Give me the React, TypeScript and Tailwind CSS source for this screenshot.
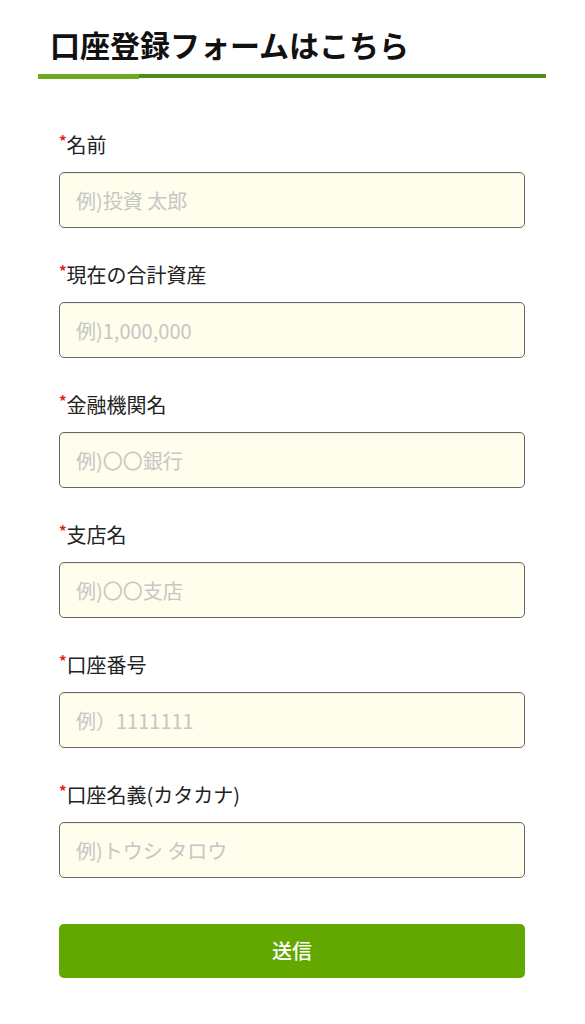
const fields = [
  { label: '名前', placeholder: '例)投資 太郎' },
  { label: '現在の合計資産', placeholder: '例)1,000,000' },
  { label: '金融機関名', placeholder: '例)〇〇銀行' },
  { label: '支店名', placeholder: '例)〇〇支店' },
  { label: '口座番号', placeholder: '例）1111111' },
  { label: '口座名義(カタカナ)', placeholder: '例)トウシ タロウ' },
];

function App() {
  return (
    <div
      className="min-h-screen bg-white text-[#222]"
      style={{ fontFamily: '"Noto Sans CJK JP", "Noto Sans", sans-serif' }}
    >
      <div className="ml-[38px] w-[508px] pt-[22px]">
        {/* 見出し */}
        <h2 className="pl-[12px] pb-[8px] text-[30px] font-bold leading-[44px] text-[#111]">
          口座登録フォームはこちら
        </h2>
        <div className="flex items-start">
          <div className="h-[5px] w-[101px] bg-[#6aab1f]" />
          <div className="h-[4px] flex-1 bg-[#4e8b1b]" />
        </div>

        <form
          className="flex flex-col gap-[33px] px-[21px] pt-[52px]"
          onSubmit={(e) => e.preventDefault()}
        >
          {fields.map((f) => (
            <div key={f.label} className="flex flex-col gap-[13px]">
              <label className="flex items-start text-[20px] leading-[28px] text-[#222]">
                <span className="mt-[1px] text-[15px] font-bold leading-[18px] text-[#e02020]">*</span>
                <span>{f.label}</span>
              </label>
              <input
                type="text"
                placeholder={f.placeholder}
                className="block h-[56px] w-full rounded-[5px] border border-[#666] bg-[#fffdeb] px-[16px] text-[20px] text-[#222] shadow-[inset_0_1px_1px_rgba(0,0,0,0.06)] outline-none placeholder:text-[#c6c6c6]"
              />
            </div>
          ))}
          <button
            type="submit"
            className="mt-[13px] block h-[54px] w-full rounded-[5px] bg-[#62a800] text-[20px] font-medium text-white"
          >
            送信
          </button>
        </form>
      </div>
    </div>
  );
}

export default App;
